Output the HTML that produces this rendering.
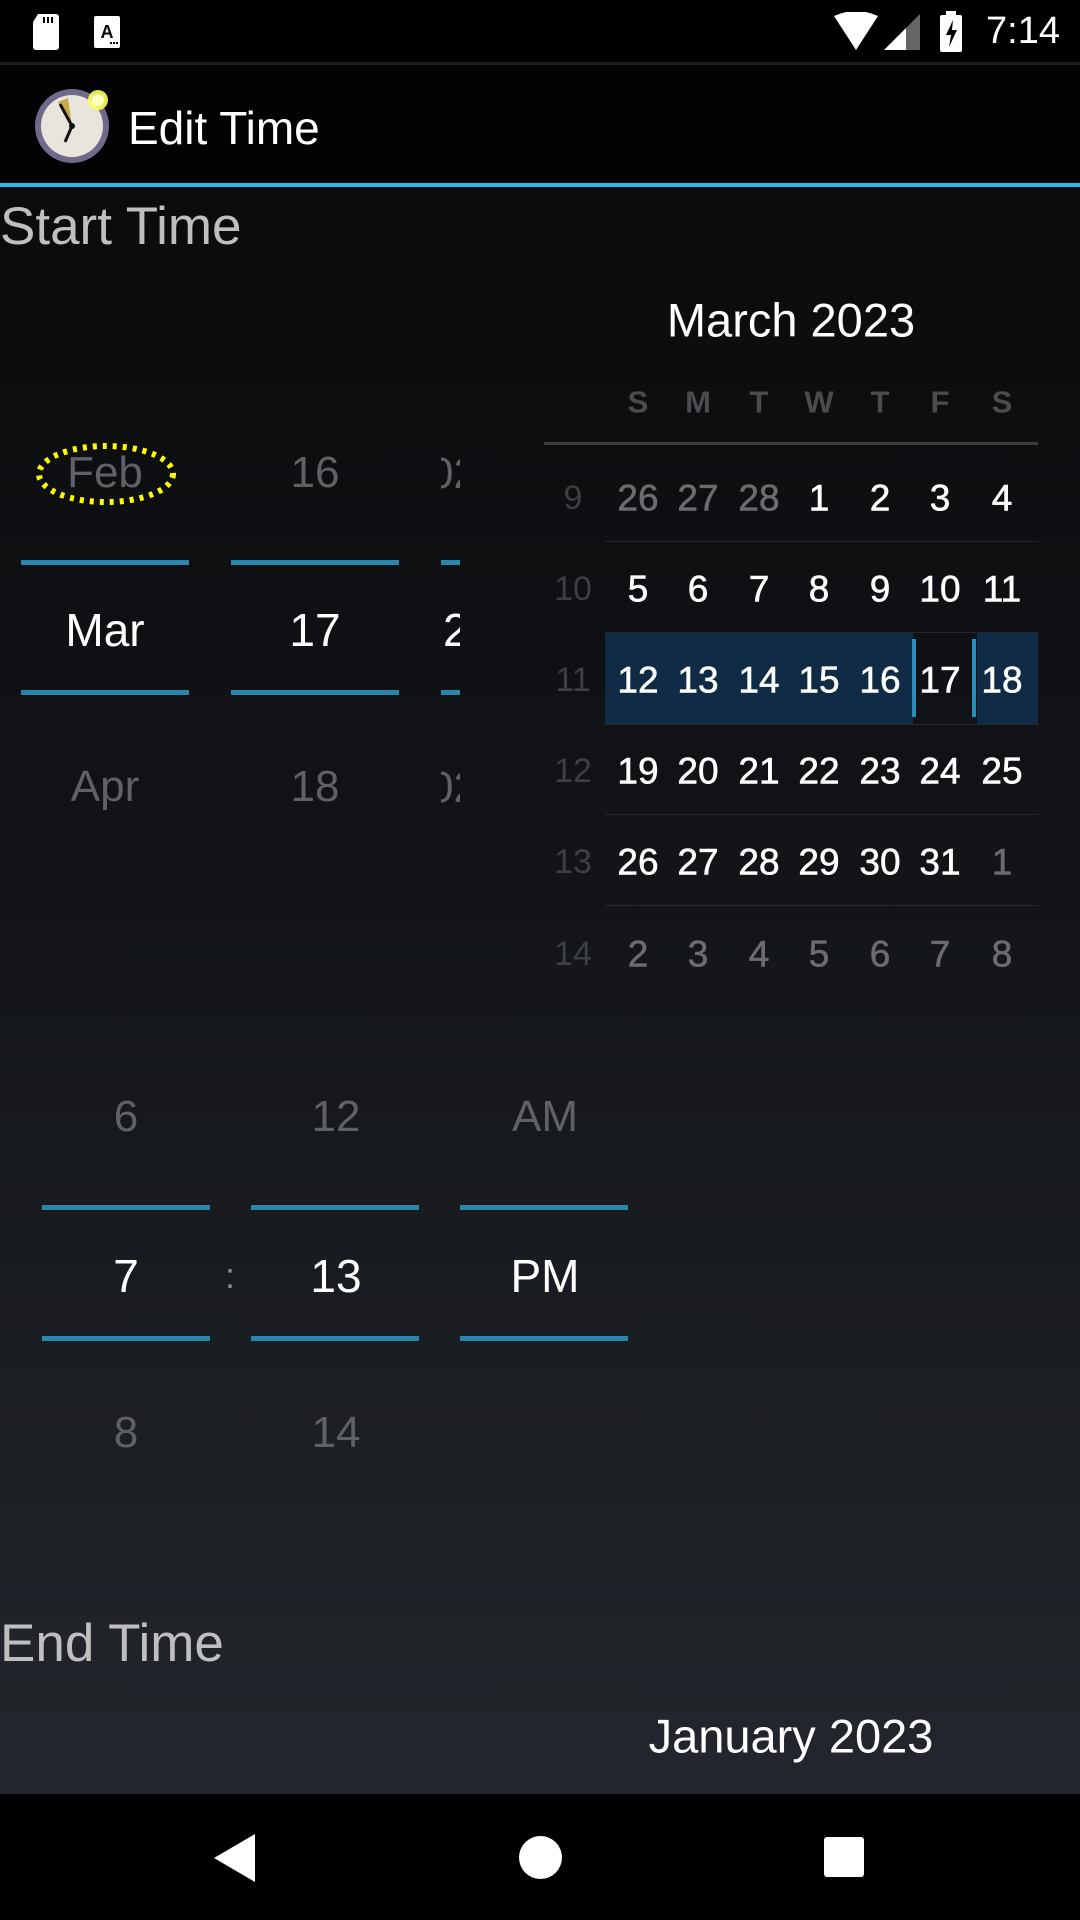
<!DOCTYPE html>
<html><head><meta charset="utf-8"><style>
*{margin:0;padding:0;box-sizing:border-box}
body{width:1080px;height:1920px;overflow:hidden;font-family:"Liberation Sans",Roboto,sans-serif;background:#000;position:relative}
.a{position:absolute}
.bg{left:0;top:187px;width:1080px;height:1607px;background:linear-gradient(#0a0b0c,#111317 40%,#1b1e22 75%,#23272d)}
.c{position:absolute;text-align:center;transform:translate(-50%,-50%);white-space:nowrap;line-height:1}
.ln{position:absolute;height:5px;background:#2a87ab}
.wk{color:#3c3f43;font-size:34px}
.d{color:#fff;font-size:37px;-webkit-text-stroke:0.6px #fff}
.sep{position:absolute;left:605px;width:433px;height:1px;background:#24272b}
</style></head><body>
<div class="a" style="left:0;top:0;width:1080px;height:62px;background:#000"></div>
<div class="a" style="left:0;top:62px;width:1080px;height:3px;background:#1d1d1d"></div>
<svg class="a" style="left:30px;top:12px" width="36" height="40"><path d="M8 2h18a3 3 0 0 1 3 3v30a3 3 0 0 1-3 3H6a3 3 0 0 1-3-3V10z" fill="#fff"/><rect x="13" y="5" width="2" height="6" fill="#000"/><rect x="17" y="5" width="2" height="6" fill="#000"/><rect x="21" y="5" width="2" height="6" fill="#000"/></svg>
<svg class="a" style="left:92px;top:14px" width="34" height="36"><rect x="2" y="2" width="26" height="32" rx="2" fill="#fff"/><text x="15" y="24" font-size="18" font-weight="bold" text-anchor="middle" font-family="Liberation Sans" fill="#000">A</text><rect x="18" y="28" width="2" height="2" fill="#000"/><rect x="21" y="28" width="2" height="2" fill="#000"/><rect x="24" y="28" width="2" height="2" fill="#000"/></svg>
<svg class="a" style="left:832px;top:12px" width="50" height="40"><path d="M2 4Q24-6 46 4L24 38z" fill="#fff"/></svg>
<svg class="a" style="left:882px;top:12px" width="40" height="40"><path d="M38 2V38H2z" fill="#666"/><path d="M24 16V38H2z" fill="#fff"/></svg>
<svg class="a" style="left:938px;top:10px" width="26" height="44"><rect x="8" y="1" width="10" height="5" fill="#fff"/><rect x="2" y="5" width="22" height="37" rx="2" fill="#fff"/><path d="M15 10L8 25h5l-2 12 8-17h-5z" fill="#000"/></svg>
<div class="a" style="left:986px;top:10px;color:#fff;font-size:38px">7:14</div>
<div class="a" style="left:0;top:65px;width:1080px;height:119px;background:#030303"></div>
<svg class="a" style="left:32px;top:84px" width="84" height="84"><circle cx="40" cy="42" r="37" fill="#6f6a8a"/><circle cx="40" cy="42" r="31" fill="#e8e6dc"/><path d="M40 42L26 18 36 14z" fill="#c6a84a"/><path d="M40 42L28 20M40 42L33 58" stroke="#111" stroke-width="3"/><circle cx="40" cy="42" r="3" fill="#111"/><circle cx="66" cy="16" r="10" fill="#ffff60" opacity=".9"/><circle cx="66" cy="16" r="6" fill="#ffffc0"/></svg>
<div class="a" style="left:128px;top:101px;color:#fff;font-size:46px">Edit Time</div>
<div class="a" style="left:0;top:183px;width:1080px;height:5px;background:#33b5e5"></div>
<div class="a bg"></div>
<div class="a" style="left:0;top:196px;color:#bfbfbf;font-size:53px">Start Time</div>
<div class="c" style="left:105px;top:473px;font-size:44px;color:#5f6165">Feb</div>
<svg class="a" style="left:34px;top:442px" width="144" height="64"><ellipse cx="72" cy="32" rx="67" ry="28" fill="none" stroke="#ffff00" stroke-width="6" stroke-dasharray="4 6"/></svg>
<div class="c" style="left:315px;top:473px;font-size:44px;color:#5f6165">16</div>
<div class="c" style="left:105px;top:630px;font-size:46px;color:#fff">Mar</div>
<div class="c" style="left:315px;top:630px;font-size:46px;color:#fff">17</div>
<div class="c" style="left:105px;top:787px;font-size:44px;color:#5f6165">Apr</div>
<div class="c" style="left:315px;top:787px;font-size:44px;color:#5f6165">18</div>
<div class="a" style="left:441px;top:440px;width:19px;height:380px;overflow:hidden">
<div class="a" style="left:-12px;top:12px;font-size:44px;color:#5f6165;line-height:1">02</div>
<div class="a" style="left:2px;top:167px;font-size:46px;color:#fff;line-height:1">2023</div>
<div class="a" style="left:-12px;top:326px;font-size:44px;color:#5f6165;line-height:1">02</div>
</div>
<div class="ln" style="left:21px;top:560px;width:168px"></div>
<div class="ln" style="left:231px;top:560px;width:168px"></div>
<div class="ln" style="left:441px;top:560px;width:19px"></div>
<div class="ln" style="left:21px;top:690px;width:168px"></div>
<div class="ln" style="left:231px;top:690px;width:168px"></div>
<div class="ln" style="left:441px;top:690px;width:19px"></div>
<div class="c" style="left:791px;top:320px;color:#fff;font-size:47px">March 2023</div>
<div class="a" style="left:544px;top:442px;width:494px;height:3px;background:#3a3c40"></div>
<div class="a" style="left:605px;top:632px;width:308px;height:92px;background:#0f2b45"></div>
<div class="a" style="left:977px;top:632px;width:61px;height:92px;background:#0f2b45"></div>
<div class="a" style="left:912px;top:639px;width:4px;height:78px;background:#2a8cb8"></div>
<div class="a" style="left:972px;top:639px;width:4px;height:78px;background:#2a8cb8"></div>
<div class="sep" style="top:541px"></div><div class="sep" style="top:632px"></div><div class="sep" style="top:724px"></div><div class="sep" style="top:814px"></div><div class="sep" style="top:905px"></div>
<div id="cal"></div>
<div class="c" style="left:126px;top:1117px;font-size:44px;color:#5f6165">6</div>
<div class="c" style="left:336px;top:1117px;font-size:44px;color:#5f6165">12</div>
<div class="c" style="left:545px;top:1117px;font-size:44px;color:#5f6165">AM</div>
<div class="c" style="left:126px;top:1276px;font-size:46px;color:#fff">7</div>
<div class="c" style="left:230px;top:1276px;font-size:36px;color:#888">:</div>
<div class="c" style="left:336px;top:1276px;font-size:46px;color:#fff">13</div>
<div class="c" style="left:545px;top:1276px;font-size:46px;color:#fff">PM</div>
<div class="c" style="left:126px;top:1433px;font-size:44px;color:#5f6165">8</div>
<div class="c" style="left:336px;top:1433px;font-size:44px;color:#5f6165">14</div>
<div class="ln" style="left:42px;top:1205px;width:168px"></div>
<div class="ln" style="left:251px;top:1205px;width:168px"></div>
<div class="ln" style="left:460px;top:1205px;width:168px"></div>
<div class="ln" style="left:42px;top:1336px;width:168px"></div>
<div class="ln" style="left:251px;top:1336px;width:168px"></div>
<div class="ln" style="left:460px;top:1336px;width:168px"></div>
<div class="a" style="left:0;top:1613px;color:#bfbfbf;font-size:53px">End Time</div>
<div class="c" style="left:791px;top:1736px;color:#fff;font-size:47px">January 2023</div>
<div class="a" style="left:0;top:1794px;width:1080px;height:126px;background:#000"></div>
<svg class="a" style="left:210px;top:1832px" width="50" height="52"><path d="M45 2V50L4 26z" fill="#fff"/></svg>
<div class="a" style="left:519px;top:1836px;width:43px;height:43px;border-radius:50%;background:#fff"></div>
<div class="a" style="left:824px;top:1837px;width:40px;height:40px;border-radius:3px;background:#fff"></div>
<div class="c" style="left:638px;top:402px;font-size:31px;font-weight:bold;color:#4a4c50">S</div>
<div class="c" style="left:698px;top:402px;font-size:31px;font-weight:bold;color:#4a4c50">M</div>
<div class="c" style="left:759px;top:402px;font-size:31px;font-weight:bold;color:#4a4c50">T</div>
<div class="c" style="left:819px;top:402px;font-size:31px;font-weight:bold;color:#4a4c50">W</div>
<div class="c" style="left:880px;top:402px;font-size:31px;font-weight:bold;color:#4a4c50">T</div>
<div class="c" style="left:940px;top:402px;font-size:31px;font-weight:bold;color:#4a4c50">F</div>
<div class="c" style="left:1002px;top:402px;font-size:31px;font-weight:bold;color:#4a4c50">S</div>
<script>
var xs=[638,698,759,819,880,940,1002],ys=[498,589,680,771,862,954];
var rows=[["9",["26g","27g","28g","1","2","3","4"]],["10",["5","6","7","8","9","10","11"]],["11",["12","13","14","15","16","17","18"]],["12",["19","20","21","22","23","24","25"]],["13",["26","27","28","29","30","31","1g"]],["14",["2g","3g","4g","5g","6g","7g","8g"]]];
var h="";rows.forEach(function(r,i){h+='<div class="c wk" style="left:573px;top:'+ys[i]+'px">'+r[0]+'</div>';r[1].forEach(function(v,j){var g=v.slice(-1)=="g";v=v.replace("g","");h+='<div class="c d" style="left:'+xs[j]+'px;top:'+ys[i]+'px;'+(g?'color:#6a6c70;-webkit-text-stroke:0.6px #6a6c70':'')+'">'+v+'</div>';});});
document.getElementById("cal").innerHTML=h;
</script>
</body></html>
